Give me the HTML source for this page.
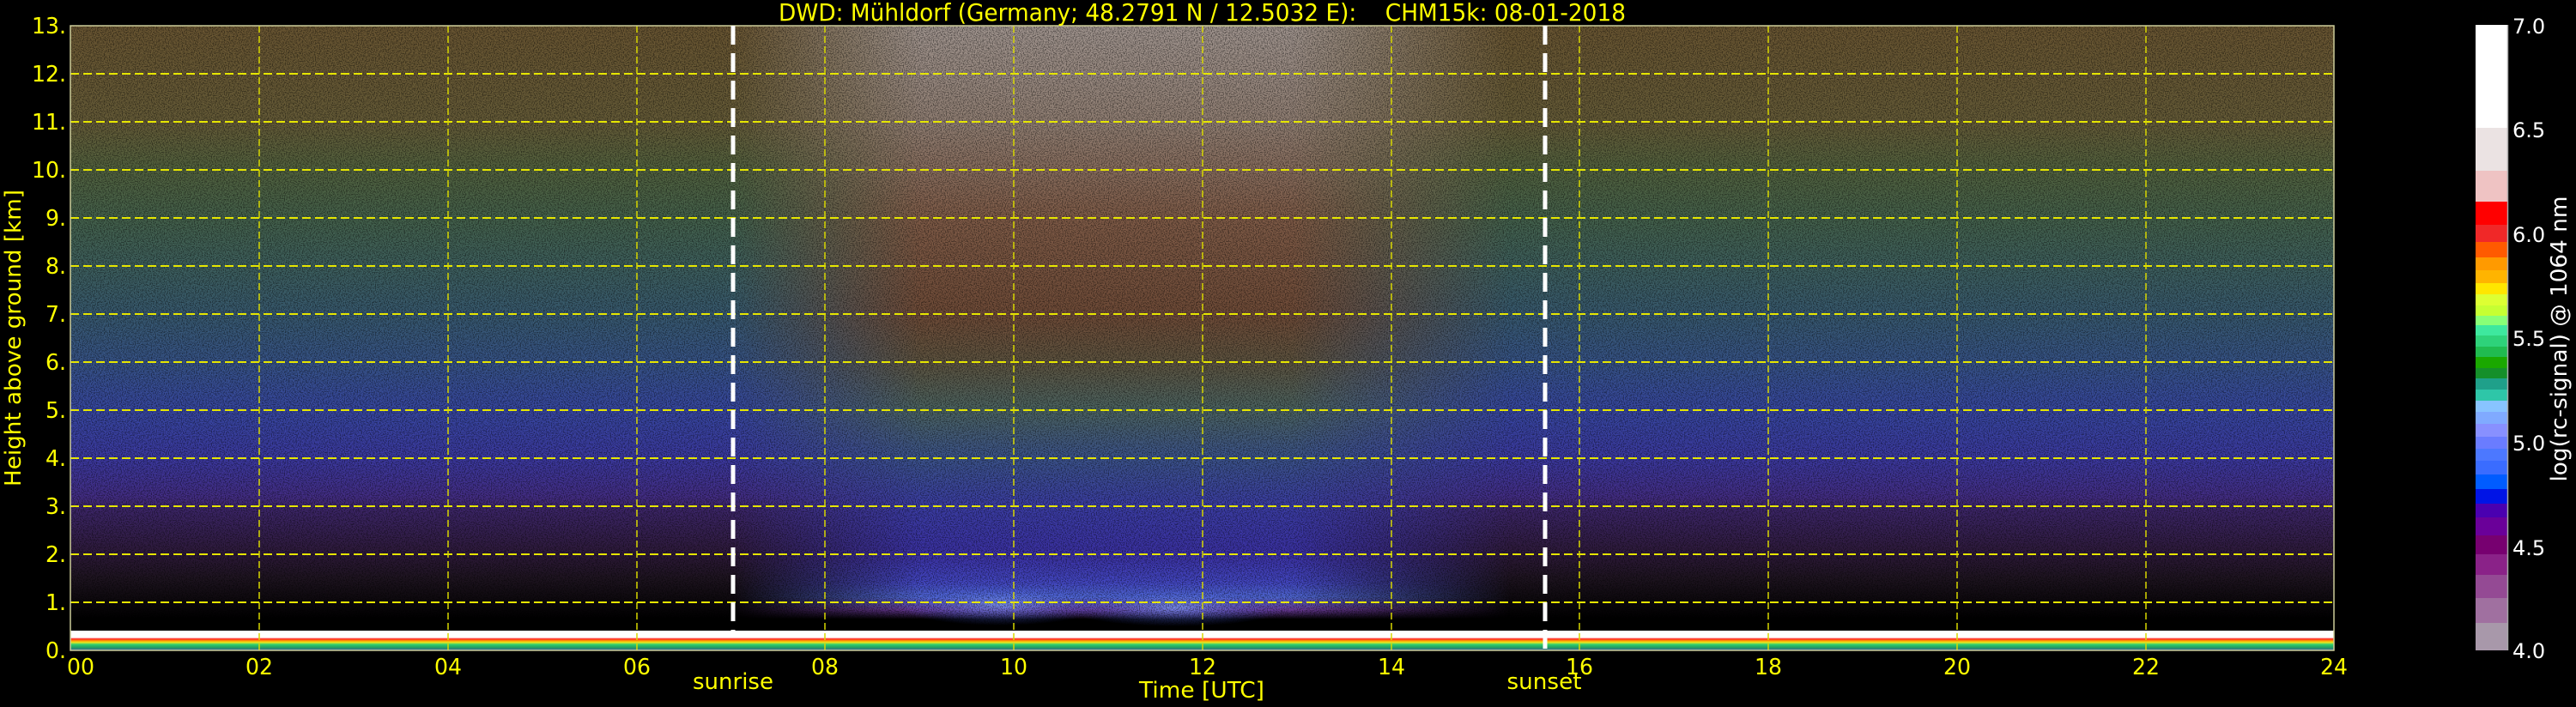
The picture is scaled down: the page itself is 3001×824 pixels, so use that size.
<!DOCTYPE html>
<html><head><meta charset="utf-8"><style>
html,body{margin:0;padding:0;background:#000;width:3001px;height:824px;overflow:hidden}
svg{display:block}
text{font-family:"DejaVu Sans","Liberation Sans",sans-serif;white-space:pre}
</style></head><body>
<svg width="3001" height="824" viewBox="0 0 3001 824" xmlns="http://www.w3.org/2000/svg">
<defs>
<linearGradient id="night" x1="0" y1="30" x2="0" y2="758" gradientUnits="userSpaceOnUse">
<stop offset="0" stop-color="#6a5632"/>
<stop offset="0.154" stop-color="#665c38"/>
<stop offset="0.231" stop-color="#52623f"/>
<stop offset="0.308" stop-color="#45624c"/>
<stop offset="0.385" stop-color="#3e605e"/>
<stop offset="0.462" stop-color="#385a70"/>
<stop offset="0.538" stop-color="#375488"/>
<stop offset="0.615" stop-color="#3848a2"/>
<stop offset="0.692" stop-color="#3c3aa2"/>
<stop offset="0.754" stop-color="#442e86"/>
<stop offset="0.77" stop-color="#3e276c"/>
<stop offset="0.846" stop-color="#2e1a3a"/>
<stop offset="0.885" stop-color="#1e1420"/>
<stop offset="0.923" stop-color="#0c080c"/>
<stop offset="0.95" stop-color="#000"/>
<stop offset="1" stop-color="#000"/>
</linearGradient>
<linearGradient id="day" x1="0" y1="30" x2="0" y2="758" gradientUnits="userSpaceOnUse">
<stop offset="0" stop-color="#a29690"/>
<stop offset="0.154" stop-color="#928074"/>
<stop offset="0.308" stop-color="#805c48"/>
<stop offset="0.462" stop-color="#704c38"/>
<stop offset="0.538" stop-color="#5e5440"/>
<stop offset="0.615" stop-color="#4c6462"/>
<stop offset="0.692" stop-color="#3c548c"/>
<stop offset="0.77" stop-color="#3c3ea6"/>
<stop offset="0.846" stop-color="#3c32a6"/>
<stop offset="0.892" stop-color="#4448c4"/>
<stop offset="0.915" stop-color="#5068d4"/>
<stop offset="0.935" stop-color="#6a3a98"/>
<stop offset="0.95" stop-color="#000"/>
<stop offset="1" stop-color="#000"/>
</linearGradient>
<linearGradient id="hmask" x1="854" y1="0" x2="1760" y2="0" gradientUnits="userSpaceOnUse">
<stop offset="0" stop-color="#fff" stop-opacity="0"/>
<stop offset="0.24" stop-color="#fff" stop-opacity="1"/>
<stop offset="0.72" stop-color="#fff" stop-opacity="1"/>
<stop offset="1" stop-color="#fff" stop-opacity="0"/>
</linearGradient>
<mask id="dm"><rect x="82" y="30" width="2637" height="728" fill="url(#hmask)"/></mask>
<linearGradient id="ground" x1="0" y1="735" x2="0" y2="758" gradientUnits="userSpaceOnUse">
<stop offset="0" stop-color="#fff"/>
<stop offset="0.35" stop-color="#fff"/>
<stop offset="0.42" stop-color="#ff2020"/>
<stop offset="0.52" stop-color="#ffa000"/>
<stop offset="0.6" stop-color="#e8e820"/>
<stop offset="0.7" stop-color="#30d070"/>
<stop offset="0.85" stop-color="#20a060"/>
<stop offset="1" stop-color="#4060a0"/>
</linearGradient>
<radialGradient id="glow" cx="0.5" cy="0.5" r="0.5">
<stop offset="0" stop-color="#7fa0ff" stop-opacity="0.8"/>
<stop offset="1" stop-color="#4050e0" stop-opacity="0"/>
</radialGradient>
<filter id="speck" x="0" y="0" width="100%" height="100%">
<feTurbulence type="fractalNoise" baseFrequency="0.8" numOctaves="1" seed="3"/>
<feColorMatrix type="matrix" values="0 0 0 0 0  0 0 0 0 0  0 0 0 0 0  -4 0 0 0 2.3"/>
</filter>
</defs>

<!-- data field -->
<rect x="82" y="30" width="2637" height="728" fill="url(#night)"/>
<rect x="82" y="30" width="2637" height="728" fill="url(#day)" mask="url(#dm)"/>
<ellipse cx="1165" cy="705" rx="120" ry="24" fill="url(#glow)"/>
<ellipse cx="1370" cy="708" rx="130" ry="22" fill="url(#glow)"/>
<rect x="82" y="30" width="2637" height="700" filter="url(#speck)" opacity="0.45"/>
<rect x="82" y="735" width="2637" height="23" fill="url(#ground)"/>

<!-- horizontal grid -->
<g stroke="#e6e600" stroke-width="2" stroke-dasharray="10,5">
<line x1="82" y1="702" x2="2719" y2="702"/><line x1="82" y1="646" x2="2719" y2="646"/>
<line x1="82" y1="590" x2="2719" y2="590"/><line x1="82" y1="534" x2="2719" y2="534"/>
<line x1="82" y1="478" x2="2719" y2="478"/><line x1="82" y1="422" x2="2719" y2="422"/>
<line x1="82" y1="366" x2="2719" y2="366"/><line x1="82" y1="310" x2="2719" y2="310"/>
<line x1="82" y1="254" x2="2719" y2="254"/><line x1="82" y1="198" x2="2719" y2="198"/>
<line x1="82" y1="142" x2="2719" y2="142"/><line x1="82" y1="86" x2="2719" y2="86"/>
</g>
<!-- vertical grid -->
<g stroke="#d8d800" stroke-width="1.5" stroke-dasharray="8,4">
<line x1="302" y1="30" x2="302" y2="758"/><line x1="522" y1="30" x2="522" y2="758"/>
<line x1="742" y1="30" x2="742" y2="758"/><line x1="961" y1="30" x2="961" y2="758"/>
<line x1="1181" y1="30" x2="1181" y2="758"/><line x1="1401" y1="30" x2="1401" y2="758"/>
<line x1="1621" y1="30" x2="1621" y2="758"/><line x1="1840" y1="30" x2="1840" y2="758"/>
<line x1="2060" y1="30" x2="2060" y2="758"/><line x1="2280" y1="30" x2="2280" y2="758"/>
<line x1="2500" y1="30" x2="2500" y2="758"/>
</g>
<rect x="82" y="30" width="2637" height="728" fill="none" stroke="#cccc99" stroke-width="1.5"/>

<!-- sunrise / sunset -->
<line x1="854" y1="30" x2="854" y2="735" stroke="#fff" stroke-width="5" stroke-dasharray="22,10"/>
<line x1="1800" y1="30" x2="1800" y2="758" stroke="#fff" stroke-width="5" stroke-dasharray="22,10"/>

<!-- title -->
<text x="907" y="24" font-size="28" fill="#ffff00" textLength="987" lengthAdjust="spacingAndGlyphs" xml:space="preserve">DWD: Mühldorf (Germany; 48.2791 N / 12.5032 E):    CHM15k: 08-01-2018</text>

<!-- y tick labels -->
<g font-size="26" fill="#ffff00" text-anchor="end">
<text x="77" y="767" textLength="24" lengthAdjust="spacingAndGlyphs">0.</text>
<text x="77" y="711" textLength="24" lengthAdjust="spacingAndGlyphs">1.</text>
<text x="77" y="655" textLength="24" lengthAdjust="spacingAndGlyphs">2.</text>
<text x="77" y="599" textLength="24" lengthAdjust="spacingAndGlyphs">3.</text>
<text x="77" y="543" textLength="24" lengthAdjust="spacingAndGlyphs">4.</text>
<text x="77" y="487" textLength="24" lengthAdjust="spacingAndGlyphs">5.</text>
<text x="77" y="431" textLength="24" lengthAdjust="spacingAndGlyphs">6.</text>
<text x="77" y="375" textLength="24" lengthAdjust="spacingAndGlyphs">7.</text>
<text x="77" y="319" textLength="24" lengthAdjust="spacingAndGlyphs">8.</text>
<text x="77" y="263" textLength="24" lengthAdjust="spacingAndGlyphs">9.</text>
<text x="77" y="207" textLength="40" lengthAdjust="spacingAndGlyphs">10.</text>
<text x="77" y="151" textLength="40" lengthAdjust="spacingAndGlyphs">11.</text>
<text x="77" y="95" textLength="40" lengthAdjust="spacingAndGlyphs">12.</text>
<text x="77" y="39" textLength="40" lengthAdjust="spacingAndGlyphs">13.</text>
</g>
<!-- x tick labels -->
<g font-size="26" fill="#ffff00" text-anchor="middle">
<text x="94" y="786" textLength="32" lengthAdjust="spacingAndGlyphs">00</text>
<text x="302" y="786" textLength="32" lengthAdjust="spacingAndGlyphs">02</text>
<text x="522" y="786" textLength="32" lengthAdjust="spacingAndGlyphs">04</text>
<text x="742" y="786" textLength="32" lengthAdjust="spacingAndGlyphs">06</text>
<text x="961" y="786" textLength="32" lengthAdjust="spacingAndGlyphs">08</text>
<text x="1181" y="786" textLength="32" lengthAdjust="spacingAndGlyphs">10</text>
<text x="1401" y="786" textLength="32" lengthAdjust="spacingAndGlyphs">12</text>
<text x="1621" y="786" textLength="32" lengthAdjust="spacingAndGlyphs">14</text>
<text x="1840" y="786" textLength="32" lengthAdjust="spacingAndGlyphs">16</text>
<text x="2060" y="786" textLength="32" lengthAdjust="spacingAndGlyphs">18</text>
<text x="2280" y="786" textLength="32" lengthAdjust="spacingAndGlyphs">20</text>
<text x="2500" y="786" textLength="32" lengthAdjust="spacingAndGlyphs">22</text>
<text x="2719" y="786" textLength="32" lengthAdjust="spacingAndGlyphs">24</text>
<text x="854" y="803" textLength="94" lengthAdjust="spacingAndGlyphs">sunrise</text>
<text x="1799" y="803" textLength="87" lengthAdjust="spacingAndGlyphs">sunset</text>
<text x="1400" y="813" textLength="146" lengthAdjust="spacingAndGlyphs">Time [UTC]</text>
</g>
<text transform="translate(24,394) rotate(-90)" font-size="26" fill="#ffff00" text-anchor="middle" textLength="346" lengthAdjust="spacingAndGlyphs">Height above ground [km]</text>

<!-- colorbar -->
<g>
<rect x="2884" y="29" width="37" height="120" fill="#ffffff"/>
<rect x="2884" y="149" width="37" height="50" fill="#ebe3e3"/>
<rect x="2884" y="199" width="37" height="36" fill="#efc3c3"/>
<rect x="2884" y="235" width="37" height="27" fill="#ff0000"/>
<rect x="2884" y="262" width="37" height="20" fill="#f02828"/>
<rect x="2884" y="282" width="37" height="18" fill="#ff5a00"/>
<rect x="2884" y="300" width="37" height="15" fill="#ff9a00"/>
<rect x="2884" y="315" width="37" height="15" fill="#ffb400"/>
<rect x="2884" y="330" width="37" height="13" fill="#ffe600"/>
<rect x="2884" y="343" width="37" height="13" fill="#ddff33"/>
<rect x="2884" y="356" width="37" height="12" fill="#c6ff33"/>
<rect x="2884" y="368" width="37" height="11" fill="#88ff77"/>
<rect x="2884" y="379" width="37" height="12" fill="#3ee89e"/>
<rect x="2884" y="391" width="37" height="13" fill="#2ed27a"/>
<rect x="2884" y="404" width="37" height="12" fill="#20bb50"/>
<rect x="2884" y="416" width="37" height="13" fill="#1aa800"/>
<rect x="2884" y="429" width="37" height="12" fill="#158f2a"/>
<rect x="2884" y="441" width="37" height="13" fill="#1fa08a"/>
<rect x="2884" y="454" width="37" height="13" fill="#2ec6a8"/>
<rect x="2884" y="467" width="37" height="13" fill="#88c4ff"/>
<rect x="2884" y="480" width="37" height="14" fill="#80aaff"/>
<rect x="2884" y="494" width="37" height="15" fill="#8890ff"/>
<rect x="2884" y="509" width="37" height="14" fill="#6a7cff"/>
<rect x="2884" y="523" width="37" height="14" fill="#4c78ff"/>
<rect x="2884" y="537" width="37" height="16" fill="#3a6cff"/>
<rect x="2884" y="553" width="37" height="17" fill="#005cff"/>
<rect x="2884" y="570" width="37" height="17" fill="#0014e6"/>
<rect x="2884" y="587" width="37" height="16" fill="#4a00b0"/>
<rect x="2884" y="603" width="37" height="21" fill="#6a0099"/>
<rect x="2884" y="624" width="37" height="22" fill="#770070"/>
<rect x="2884" y="646" width="37" height="24" fill="#8a2288"/>
<rect x="2884" y="670" width="37" height="27" fill="#944a94"/>
<rect x="2884" y="697" width="37" height="29" fill="#a070a0"/>
<rect x="2884" y="726" width="37" height="32" fill="#a898aa"/>
<line x1="2921.5" y1="29" x2="2921.5" y2="758" stroke="#aaa" stroke-width="1.5"/>
</g>
<g font-size="24" fill="#ffffff">
<text x="2927" y="39">7.0</text>
<text x="2927" y="160">6.5</text>
<text x="2927" y="282">6.0</text>
<text x="2927" y="403">5.5</text>
<text x="2927" y="525">5.0</text>
<text x="2927" y="647">4.5</text>
<text x="2927" y="767">4.0</text>
</g>
<text transform="translate(2990,395) rotate(-90)" font-size="26" fill="#ffffff" text-anchor="middle" textLength="333" lengthAdjust="spacingAndGlyphs">log(rc-signal) @ 1064 nm</text>
</svg>
</body></html>
